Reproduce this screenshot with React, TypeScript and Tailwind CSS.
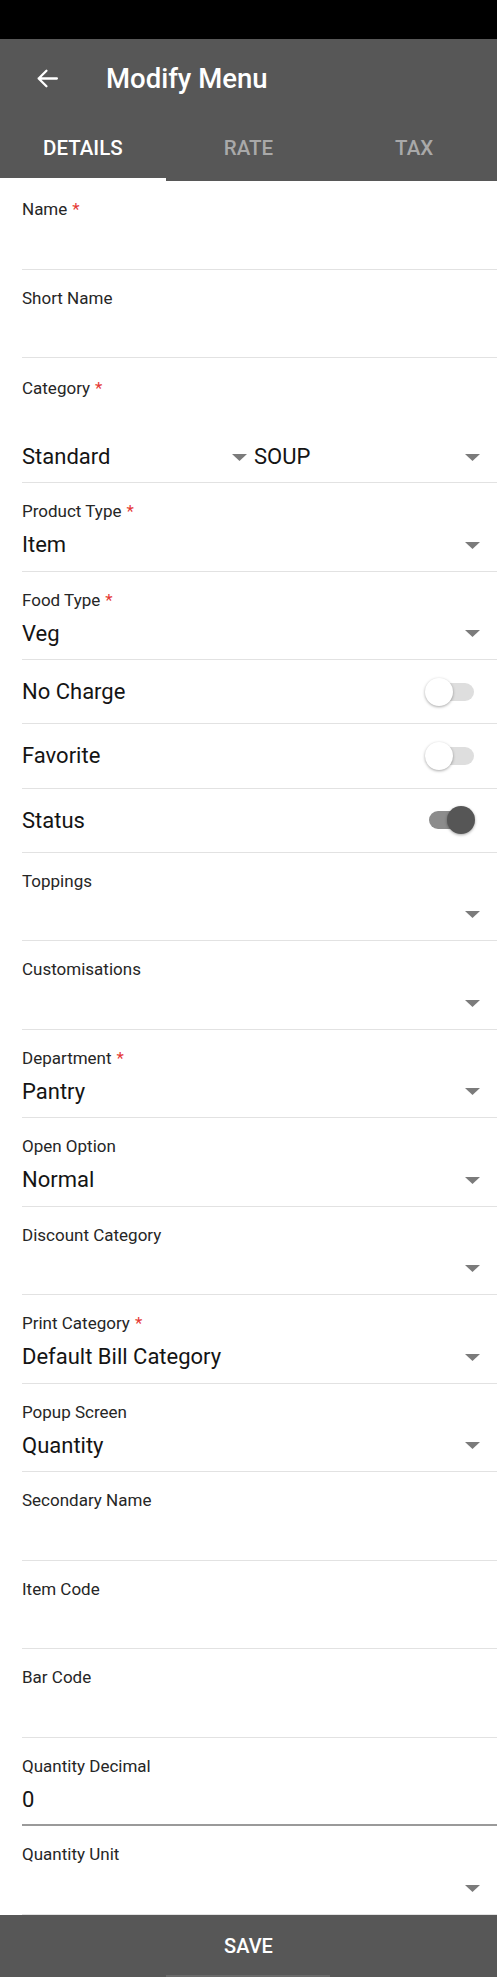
import React from 'react';

const font = { fontFamily: 'Roboto, "Noto Sans", sans-serif' };

const Caret = () => (
  <svg width="15" height="7" viewBox="0 0 15 7" className="shrink-0">
    <path d="M0 0 L15 0 L7.5 7 Z" fill="#7b7b7b" />
  </svg>
);

const Label: React.FC<{ text: string; required?: boolean }> = ({ text, required }) => (
  <div className="text-[17px] leading-[22px] text-[#262626]">
    {text}
    {required && <span className="text-[#e53935] ml-[5px]">*</span>}
  </div>
);

interface FieldProps {
  label: string;
  required?: boolean;
  value?: string;
  select?: boolean;
  focused?: boolean;
}

const Field: React.FC<FieldProps> = ({ label, required, value, select, focused }) => (
  <div
    className={`ml-[22px] h-[88.5px] flex flex-col pt-[17px] ${
      focused ? 'border-b-2 border-[#9a9a9a]' : 'border-b border-[#e2e2e2]'
    }`}
  >
    <Label text={label} required={required} />
    <div className="flex items-center mt-[9px] h-[28px] pr-[17px]">
      <span className="flex-1 text-[22px] leading-[28px] text-[#141414]">{value}</span>
      {select && <Caret />}
    </div>
  </div>
);

const Toggle: React.FC<{ label: string; on?: boolean }> = ({ label, on }) => (
  <div className="ml-[22px] h-[64.3px] flex items-center justify-between border-b border-[#e2e2e2] pr-[22px]">
    <span className="text-[22px] text-[#141414]">{label}</span>
    <div className="relative w-[50px] h-[30px] flex items-center">
      <div className={`ml-[4px] w-[45px] h-[18px] rounded-full ${on ? 'bg-[#8c8c8c]' : 'bg-[#dedede]'}`} />
      <div
        className={`absolute top-[1px] w-[28px] h-[28px] rounded-full shadow-[0_1px_3px_rgba(0,0,0,0.35)] ${
          on ? 'left-[22px] bg-[#565656]' : 'left-0 bg-white'
        }`}
      />
    </div>
  </div>
);

export default function App() {
  return (
    <div className="w-[497px] h-[1977px] flex flex-col bg-white overflow-hidden" style={font}>
      <div className="h-[39px] bg-black shrink-0" />
      <header className="bg-[#575757] shrink-0">
        <div className="h-[79px] flex items-center pl-[35px]">
          <svg width="25" height="25" viewBox="0 0 24 24" fill="none" stroke="white" strokeWidth="2.2" strokeLinecap="round" strokeLinejoin="round">
            <path d="M21 12H3.5M11 4.5L3.5 12L11 19.5" />
          </svg>
          <h1 className="ml-[46px] text-[27.5px] font-medium text-white leading-none">Modify Menu</h1>
        </div>
        <div className="h-[63px] grid grid-cols-3">
          {['DETAILS', 'RATE', 'TAX'].map((t, i) => (
            <div
              key={t}
              className={`flex items-center justify-center text-[20.5px] font-medium ${
                i === 0 ? 'text-white border-b-[3px] border-white' : 'text-[#a9a9a9] border-b-[3px] border-transparent'
              }`}
            >
              {t}
            </div>
          ))}
        </div>
      </header>

      <main className="flex-1 overflow-hidden">
        <Field label="Name" required />
        <Field label="Short Name" />
        <div className="ml-[22px] h-[125px] flex flex-col pt-[19px] border-b border-[#e2e2e2]">
          <Label text="Category" required />
          <div className="flex items-center mt-[44px] h-[28px] pr-[17px]">
            <div className="w-[225px] flex items-center">
              <span className="flex-1 text-[22px] leading-[28px] text-[#141414]">Standard</span>
              <Caret />
            </div>
            <div className="flex-1 flex items-center ml-[7px]">
              <span className="flex-1 text-[22px] leading-[28px] text-[#141414]">SOUP</span>
              <Caret />
            </div>
          </div>
        </div>
        <Field label="Product Type" required value="Item" select />
        <Field label="Food Type" required value="Veg" select />
        <Toggle label="No Charge" />
        <Toggle label="Favorite" />
        <Toggle label="Status" on />
        <Field label="Toppings" select />
        <Field label="Customisations" select />
        <Field label="Department" required value="Pantry" select />
        <Field label="Open Option" value="Normal" select />
        <Field label="Discount Category" select />
        <Field label="Print Category" required value="Default Bill Category" select />
        <Field label="Popup Screen" value="Quantity" select />
        <Field label="Secondary Name" />
        <Field label="Item Code" />
        <Field label="Bar Code" />
        <Field label="Quantity Decimal" value="0" focused />
        <Field label="Quantity Unit" select />
      </main>

      <footer className="relative h-[62px] shrink-0 bg-[#575757] flex items-center justify-center">
        <span className="text-[20px] font-medium text-white">SAVE</span>
        <div className="absolute bottom-0 left-[166px] w-[164px] h-[2px] bg-[#6a6a6a]" />
      </footer>
    </div>
  );
}
